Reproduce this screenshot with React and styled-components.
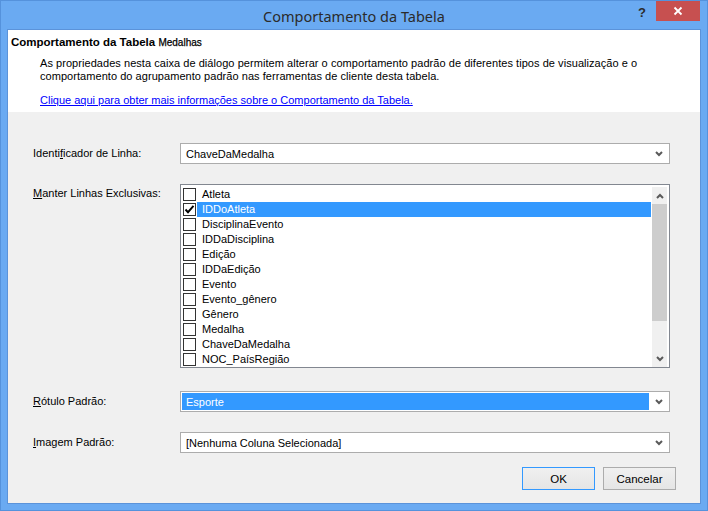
import React, { useState } from "react";
import styled, { createGlobalStyle } from "styled-components";

const GlobalStyle = createGlobalStyle`
  html, body {
    margin: 0;
    padding: 0;
    background: #ffffff;
  }
  * {
    box-sizing: border-box;
  }
`;

const Window = styled.div`
  width: 708px;
  height: 511px;
  display: flex;
  flex-direction: column;
  padding: 0 7px 7px;
  background-color: #6aaaf2;
  border: 1px solid #5592dc;
  font-family: "Liberation Sans", Arial, sans-serif;
  font-size: 11px;
  color: #000;
`;

const TitleBar = styled.div`
  height: 29px;
  display: grid;
  grid-template-columns: 1fr auto 1fr;
  align-items: center;
`;

const Title = styled.div`
  grid-column: 2;
  font-family: "Noto Sans", "Open Sans", sans-serif;
  font-size: 14.5px;
  color: #2b2b2b;
  padding-top: 1px;
`;

const Controls = styled.div`
  grid-column: 3;
  justify-self: end;
  align-self: start;
  display: flex;
  align-items: flex-start;
`;

const HelpButton = styled.div`
  width: 20px;
  height: 20px;
  margin-right: 4px;
  display: flex;
  align-items: center;
  justify-content: center;
  font-family: "Liberation Sans", Arial, sans-serif;
  font-weight: bold;
  font-size: 13px;
  color: #2c2c2c;
  padding-top: 2px;
`;

const CloseButton = styled.div`
  width: 44px;
  height: 20px;
  background-color: #c75050;
  display: flex;
  align-items: center;
  justify-content: center;
`;

const Client = styled.div`
  flex: 1;
  display: flex;
  flex-direction: column;
  background-color: #f0f0f0;
  box-shadow: 0 0 0 1px #5b93da;
`;

const Header = styled.div`
  height: 82px;
  background-color: #ffffff;
  padding: 4px 10px 0 3px;
`;

const HeaderTitle = styled.div`
  line-height: 16px;
  font-size: 11.5px;
  font-weight: bold;
  span {
    font-size: 10px;
    font-weight: normal;
    -webkit-text-stroke: 0.25px #000;
  }
`;

const Description = styled.p`
  margin: 6px 0 0 29px;
  line-height: 13px;
  width: 620px;
  letter-spacing: 0.05px;
`;

const HelpLink = styled.a`
  display: block;
  margin: 11px 0 0 29px;
  line-height: 13px;
  color: #0000ff;
  text-decoration: underline;
  cursor: pointer;
`;

const Form = styled.div`
  padding: 31px 24px 0 25px;
  display: flex;
  flex-direction: column;
`;

const Field = styled.div`
  display: grid;
  grid-template-columns: 147px 490px;
  align-items: ${(p) => (p.$top ? "start" : "center")};
  margin-top: ${(p) => p.$gap || 0}px;
`;

const Label = styled.label`
  line-height: 13px;
  padding-top: ${(p) => (p.$top ? 3 : 0)}px;
  u {
    text-decoration-thickness: 1px;
    text-underline-offset: 1px;
  }
`;

const Combo = styled.div`
  height: 21px;
  display: flex;
  align-items: stretch;
  padding: 1px;
  background-color: #ffffff;
  border: 1px solid #acacac;
`;

const ComboValue = styled.div`
  flex: 1;
  display: flex;
  align-items: center;
  padding-left: 4px;
  margin-right: 1px;
  background-color: ${(p) => (p.$selected ? "#3399ff" : "transparent")};
  color: ${(p) => (p.$selected ? "#ffffff" : "#000000")};
`;

const ComboArrow = styled.div`
  width: 18px;
  display: flex;
  align-items: center;
  justify-content: center;
  padding-top: 1px;
`;

const ListBox = styled.div`
  height: 184px;
  display: flex;
  padding: 1px;
  background-color: #ffffff;
  border: 1px solid #828790;
`;

const Items = styled.div`
  flex: 1;
  padding-top: 1px;
`;

const Item = styled.div`
  height: 15px;
  display: flex;
  align-items: center;
  padding-left: 1px;
`;

const Box = styled.div`
  width: 13px;
  height: 13px;
  flex: none;
  border: 1px solid #333333;
  background-color: #ffffff;
  display: flex;
  align-items: center;
  justify-content: center;
`;

const ItemText = styled.div`
  flex: 1;
  height: 15px;
  margin-left: 1px;
  padding-left: 5px;
  line-height: 15px;
  background-color: ${(p) => (p.$selected ? "#3399ff" : "transparent")};
  color: ${(p) => (p.$selected ? "#ffffff" : "#000000")};
`;

const ScrollBar = styled.div`
  width: 15px;
  margin: 1px 1px 0 1px;
  height: 180px;
  display: flex;
  flex-direction: column;
  background-color: #f0f0f0;
`;

const ScrollArrow = styled.div`
  height: 17px;
  display: flex;
  align-items: center;
  justify-content: center;
`;

const Thumb = styled.div`
  height: 117px;
  background-color: #cdcdcd;
`;

const Track = styled.div`
  flex: 1;
`;

const Buttons = styled.div`
  display: flex;
  justify-content: flex-end;
  gap: 8px;
  margin-top: 14px;
`;

const Button = styled.button`
  width: 73px;
  height: 23px;
  padding: 0;
  font-family: "Liberation Sans", Arial, sans-serif;
  font-size: 11.5px;
  color: #000;
  background: linear-gradient(#f0f0f0, #e5e5e5);
  border: 1px solid ${(p) => (p.$default ? "#3399ff" : "#acacac")};
`;

const Chevron = ({ up }) => (
  <svg width="8" height="6" viewBox="0 0 8 6">
    <polyline
      points={up ? "1,5 4,2 7,5" : "1,1 4,4 7,1"}
      fill="none"
      stroke="#5a5a5a"
      strokeWidth="2"
    />
  </svg>
);

const CheckMark = () => (
  <svg width="11" height="11" viewBox="0 0 11 11">
    <polyline
      points="1.5,5.5 4,8.2 9.5,1.8"
      fill="none"
      stroke="#000"
      strokeWidth="1.9"
    />
  </svg>
);

const CloseGlyph = () => (
  <svg width="10" height="10" viewBox="0 0 10 10">
    <path d="M1.5 1.5 L8.5 8.5 M8.5 1.5 L1.5 8.5" stroke="#fff" strokeWidth="1.8" />
  </svg>
);

const columns = [
  "Atleta",
  "IDDoAtleta",
  "DisciplinaEvento",
  "IDDaDisciplina",
  "Edição",
  "IDDaEdição",
  "Evento",
  "Evento_gênero",
  "Gênero",
  "Medalha",
  "ChaveDaMedalha",
  "NOC_PaísRegião",
];

function App() {
  const [checked, setChecked] = useState(["IDDoAtleta"]);
  const [selected, setSelected] = useState("IDDoAtleta");

  const toggle = (name) =>
    setChecked(
      checked.includes(name)
        ? checked.filter((c) => c !== name)
        : [...checked, name]
    );

  return (
    <>
      <GlobalStyle />
      <Window>
        <TitleBar>
          <Title>Comportamento da Tabela</Title>
          <Controls>
            <HelpButton>?</HelpButton>
            <CloseButton>
              <CloseGlyph />
            </CloseButton>
          </Controls>
        </TitleBar>
        <Client>
          <Header>
            <HeaderTitle>
              Comportamento da Tabela <span>Medalhas</span>
            </HeaderTitle>
            <Description>
              As propriedades nesta caixa de diálogo permitem alterar o
              comportamento padrão de diferentes tipos de visualização e o
              comportamento do agrupamento padrão nas ferramentas de cliente
              desta tabela.
            </Description>
            <HelpLink>
              Clique aqui para obter mais informações sobre o Comportamento da
              Tabela.
            </HelpLink>
          </Header>
          <Form>
            <Field>
              <Label>
                Identi<u>f</u>icador de Linha:
              </Label>
              <Combo>
                <ComboValue>ChaveDaMedalha</ComboValue>
                <ComboArrow>
                  <Chevron />
                </ComboArrow>
              </Combo>
            </Field>
            <Field $gap={20} $top>
              <Label $top>
                <u>M</u>anter Linhas Exclusivas:
              </Label>
              <ListBox>
                <Items>
                  {columns.map((name) => (
                    <Item key={name} onClick={() => setSelected(name)}>
                      <Box onClick={() => toggle(name)}>
                        {checked.includes(name) && <CheckMark />}
                      </Box>
                      <ItemText $selected={selected === name}>{name}</ItemText>
                    </Item>
                  ))}
                </Items>
                <ScrollBar>
                  <ScrollArrow>
                    <Chevron up />
                  </ScrollArrow>
                  <Thumb />
                  <Track />
                  <ScrollArrow>
                    <Chevron />
                  </ScrollArrow>
                </ScrollBar>
              </ListBox>
            </Field>
            <Field $gap={23}>
              <Label>
                <u>R</u>ótulo Padrão:
              </Label>
              <Combo>
                <ComboValue $selected>Esporte</ComboValue>
                <ComboArrow>
                  <Chevron />
                </ComboArrow>
              </Combo>
            </Field>
            <Field $gap={20}>
              <Label>
                <u>I</u>magem Padrão:
              </Label>
              <Combo>
                <ComboValue>[Nenhuma Coluna Selecionada]</ComboValue>
                <ComboArrow>
                  <Chevron />
                </ComboArrow>
              </Combo>
            </Field>
            <Buttons>
              <Button $default>OK</Button>
              <Button>Cancelar</Button>
            </Buttons>
          </Form>
        </Client>
      </Window>
    </>
  );
}

export default App;
